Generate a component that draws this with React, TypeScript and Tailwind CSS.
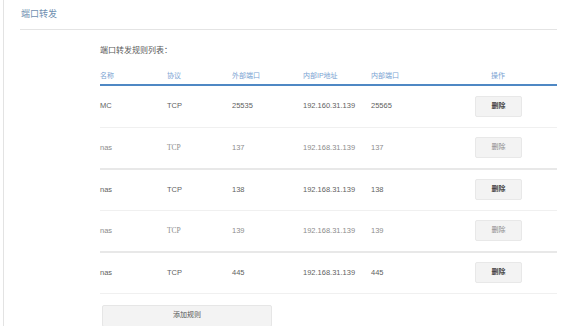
import React from 'react';

type Rule = { name: string; proto: string; extPort: string; ip: string; inPort: string; dim: boolean };

const rules: Rule[] = [
  { name: 'MC', proto: 'TCP', extPort: '25535', ip: '192.160.31.139', inPort: '25565', dim: false },
  { name: 'nas', proto: 'TCP', extPort: '137', ip: '192.168.31.139', inPort: '137', dim: true },
  { name: 'nas', proto: 'TCP', extPort: '138', ip: '192.168.31.139', inPort: '138', dim: false },
  { name: 'nas', proto: 'TCP', extPort: '139', ip: '192.168.31.139', inPort: '139', dim: true },
  { name: 'nas', proto: 'TCP', extPort: '445', ip: '192.168.31.139', inPort: '445', dim: false },
];

// name / proto / ext port / ip / in port / action
const cols = 'grid grid-cols-[67px_65px_71px_68px_68px_1fr]';

const App = () => {
  return (
    <div
      className="h-[326px] w-[573px] overflow-hidden bg-white"
      style={{ fontFamily: '"Liberation Sans", "Noto Sans CJK SC", sans-serif' }}
    >
      <div className="ml-[3px] h-full border-l border-[#e3e3e3] pt-[4px]">
        {/* title */}
        <div className="flex h-[25px] items-center pb-[3px] pl-[17px] text-[9px] text-[#6f8fb0]">端口转发</div>
        <div className="ml-[16px] h-px w-[537px] bg-[#e4e4e4]" />

        <div className="ml-[96px] w-[457px]">
          <div className="mt-[14px] flex h-[14px] items-center text-[8px] text-[#5a5a5a]">端口转发规则列表：</div>

          {/* header */}
          <div className={`${cols} h-[26px] items-center pt-[10px] text-[7px] text-[#7aa3d2]`}>
            <span>名称</span>
            <span>协议</span>
            <span>外部端口</span>
            <span>内部IP地址</span>
            <span>内部端口</span>
            <span className="text-center">操作</span>
          </div>
          <div className="h-[1.5px] bg-[#4f88c4]" />

          {rules.map((r, i) => (
            <div key={i}>
              <div
                className={`${cols} items-center text-[7.5px] ${r.dim ? 'text-[#8c8c8c]' : 'text-[#5f5f5f]'} ${
                  i === 0 ? 'h-[41px]' : 'h-[40px]'
                }`}
              >
                <span>{r.name}</span>
                <span style={r.dim ? { fontFamily: '"Liberation Serif", serif' } : undefined}>{r.proto}</span>
                <span>{r.extPort}</span>
                <span>{r.ip}</span>
                <span>{r.inPort}</span>
                <div className="flex justify-center pl-[1px]">
                  <button
                    className={`flex h-[21px] w-[47px] items-center justify-center rounded-[2px] border border-[#e8e8e8] bg-[#f3f3f3] text-[7px] ${
                      r.dim ? 'text-[#8a8a8a]' : 'font-bold text-[#444]'
                    }`}
                  >
                    删除
                  </button>
                </div>
              </div>
              {r.dim ? <div className="h-[2px] bg-[#e8e8e8]" /> : <div className="h-px bg-[#f0f0f0]" />}
            </div>
          ))}

          <button className="ml-[2px] mt-[11px] flex h-[22px] w-[170px] items-center justify-center rounded-[2px] border border-[#e6e6e6] bg-[#f3f3f3] text-[7px] text-[#555]">
            添加规则
          </button>
        </div>
      </div>
    </div>
  );
};

export default App;
